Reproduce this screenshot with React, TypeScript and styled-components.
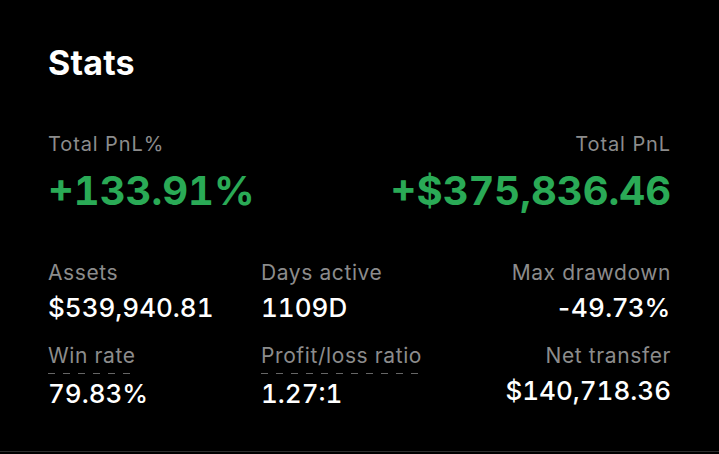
import styled, { createGlobalStyle } from "styled-components";

const GlobalStyle = createGlobalStyle`
    html, body {
        margin: 0;
        padding: 0;
        background: #000;
    }
    body {
        font-family: Inter, "Noto Sans", "Liberation Sans", sans-serif;
        color: #fff;
    }
`;

interface Stat {
    label: string;
    value: string;
    hint?: boolean;
    signed?: boolean;
}

const stats: Stat[] = [
    { label: "Assets", value: "$539,940.81" },
    { label: "Days active", value: "1109D" },
    { label: "Max drawdown", value: "-49.73%", signed: true },
    { label: "Win rate", value: "79.83%", hint: true },
    { label: "Profit/loss ratio", value: "1.27:1", hint: true },
    { label: "Net transfer", value: "$140,718.36" },
];

export default function App() {
    return (
        <>
            <GlobalStyle />
            <Panel>
                <Title>Stats</Title>
                <Summary>
                    <SummaryItem>
                        <Label>Total PnL%</Label>
                        <BigValue>+133.91%</BigValue>
                    </SummaryItem>
                    <SummaryItem $right>
                        <Label>Total PnL</Label>
                        <BigValue>+$375,836.46</BigValue>
                    </SummaryItem>
                </Summary>
                <Grid>
                    {stats.map((s, i) => (
                        <Cell key={s.label} $right={i % 3 === 2}>
                            <SmallLabel $hint={s.hint}>{s.label}</SmallLabel>
                            <Value $proportional={s.signed}>{s.value}</Value>
                        </Cell>
                    ))}
                </Grid>
            </Panel>
        </>
    );
}

const Panel = styled.div`
    width: 623px;
    padding: 43px 48px 40px;
    border-bottom: 1px solid #2e2e2e;
    box-sizing: content-box;
`;

const Title = styled.h2`
    margin: 0;
    font-size: 34px;
    line-height: 40px;
    font-weight: 700;
    letter-spacing: 0.2px;
`;

const Summary = styled.div`
    display: flex;
    justify-content: space-between;
    margin-top: 47px;
`;

const SummaryItem = styled.div<{ $right?: boolean }>`
    display: flex;
    flex-direction: column;
    gap: 10px;
    align-items: ${(p) => (p.$right ? "flex-end" : "flex-start")};
`;

const Label = styled.div`
    font-size: 20px;
    line-height: 28px;
    letter-spacing: 0.9px;
    color: #8c8c8c;
`;

const BigValue = styled.div`
    font-size: 40px;
    line-height: 46px;
    font-weight: 700;
    font-variant-numeric: tabular-nums;
    color: #2aaa56;
`;

const Grid = styled.div`
    display: grid;
    grid-template-columns: repeat(3, 1fr);
    column-gap: 16px;
    row-gap: 18px;
    margin-top: 46px;
`;

const Cell = styled.div<{ $right?: boolean }>`
    display: flex;
    flex-direction: column;
    gap: 5px;
    align-items: ${(p) => (p.$right ? "flex-end" : "flex-start")};
`;

const SmallLabel = styled.div<{ $hint?: boolean }>`
    font-size: 21px;
    line-height: 26px;
    letter-spacing: 0.6px;
    color: #8c8c8c;
    margin-bottom: ${(p) => (p.$hint ? "-2px" : "0")};
    padding-bottom: ${(p) => (p.$hint ? "5px" : "0")};
    background-image: ${(p) =>
        p.$hint ? "linear-gradient(to right, #666 0 7px, transparent 7px 15px)" : "none"};
    background-size: 15px 1px;
    background-repeat: repeat-x;
    background-position: 0 100%;
`;

const Value = styled.div<{ $proportional?: boolean }>`
    font-size: 26px;
    line-height: 34px;
    font-weight: 500;
    letter-spacing: ${(p) => (p.$proportional ? "0.6px" : "0")};
    font-variant-numeric: ${(p) => (p.$proportional ? "normal" : "tabular-nums")};
`;
